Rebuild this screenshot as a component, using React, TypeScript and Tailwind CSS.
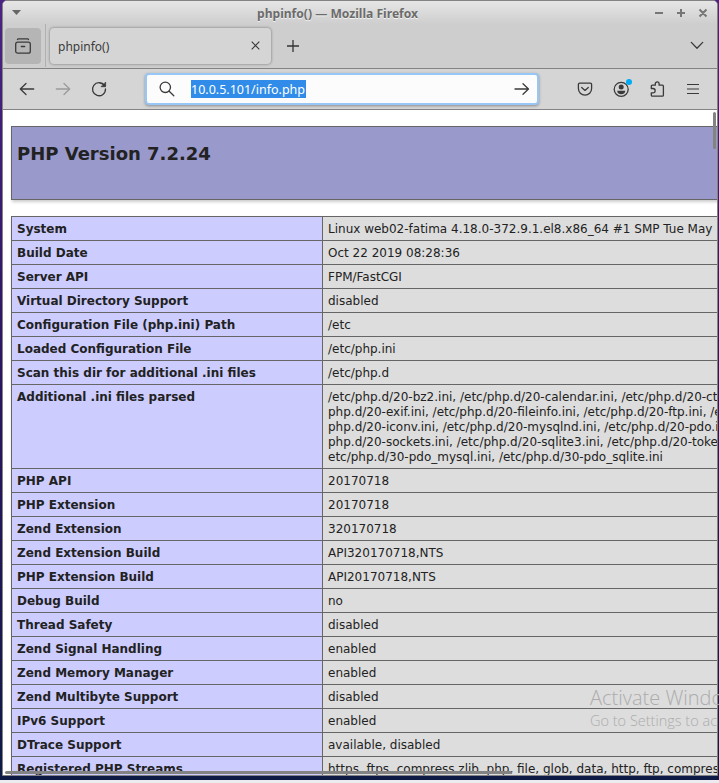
import React from "react";

const rows: [string, string[]][] = [
  ["System", ["Linux web02-fatima 4.18.0-372.9.1.el8.x86_64 #1 SMP Tue May"]],
  ["Build Date", ["Oct 22 2019 08:28:36"]],
  ["Server API", ["FPM/FastCGI"]],
  ["Virtual Directory Support", ["disabled"]],
  ["Configuration File (php.ini) Path", ["/etc"]],
  ["Loaded Configuration File", ["/etc/php.ini"]],
  ["Scan this dir for additional .ini files", ["/etc/php.d"]],
  [
    "Additional .ini files parsed",
    [
      "/etc/php.d/20-bz2.ini, /etc/php.d/20-calendar.ini, /etc/php.d/20-ct",
      "php.d/20-exif.ini, /etc/php.d/20-fileinfo.ini, /etc/php.d/20-ftp.ini, /e",
      "php.d/20-iconv.ini, /etc/php.d/20-mysqlnd.ini, /etc/php.d/20-pdo.i",
      "php.d/20-sockets.ini, /etc/php.d/20-sqlite3.ini, /etc/php.d/20-toke",
      "etc/php.d/30-pdo_mysql.ini, /etc/php.d/30-pdo_sqlite.ini",
    ],
  ],
  ["PHP API", ["20170718"]],
  ["PHP Extension", ["20170718"]],
  ["Zend Extension", ["320170718"]],
  ["Zend Extension Build", ["API320170718,NTS"]],
  ["PHP Extension Build", ["API20170718,NTS"]],
  ["Debug Build", ["no"]],
  ["Thread Safety", ["disabled"]],
  ["Zend Signal Handling", ["enabled"]],
  ["Zend Memory Manager", ["enabled"]],
  ["Zend Multibyte Support", ["disabled"]],
  ["IPv6 Support", ["enabled"]],
  ["DTrace Support", ["available, disabled"]],
  ["Registered PHP Streams", ["https, ftps, compress.zlib, php, file, glob, data, http, ftp, compres"]],
];

type IconProps = { className?: string; children: React.ReactNode; w?: number };

function Icon({ className = "", children, w = 1.3 }: IconProps) {
  return (
    <svg
      viewBox="0 0 16 16"
      className={`block size-4 shrink-0 overflow-visible ${className}`}
      fill="none"
      stroke="currentColor"
      strokeWidth={w}
      strokeLinecap="round"
      strokeLinejoin="round"
    >
      {children}
    </svg>
  );
}

function TitleBar() {
  return (
    <div className="flex h-[23px] shrink-0 items-center bg-linear-to-b from-[#e6e6e6] to-[#cecece] text-[#6b6b6b]">
      <svg className="ml-[9px] block h-[5px] w-[9px]" viewBox="0 0 9 5">
        <path d="M0 0h9L4.500 5z" fill="#666" />
      </svg>
      <div className="ml-[236px] w-[170px] pt-[2px] text-[12.100px] leading-[20px] font-bold whitespace-nowrap [text-shadow:0_1px_0_#f2f2f2]">
        phpinfo() — Mozilla Firefox
      </div>
      <svg className="ml-[227px] block h-[10px] w-[54px]" viewBox="0 0 54 10" stroke="#767676" strokeWidth="2" fill="none">
        <path d="M1 5h8M23 5h8M27 1v8M45.500 1.500l7 7M52.500 1.500l-7 7" />
      </svg>
    </div>
  );
}

function TabBar() {
  return (
    <div className="flex h-[44px] shrink-0 items-center bg-[#cecece] pb-px">
      <div className="ml-[2px] flex h-9 w-9 items-center justify-center rounded-[4px] bg-[#b5b5b5]">
        <Icon>
          <rect x="0.700" y="4.200" width="14.600" height="11" rx="2" />
          <path d="M2.500 1.500Q2.700 0.800 3.500 0.800h9Q13.300 0.800 13.500 1.500M6.300 8.500h3.400" />
        </Icon>
      </div>
      <div className="ml-1 h-full w-px bg-[#b0b0b0]" />
      <div className="ml-1 flex h-9 w-[221px] items-center rounded-[4px] bg-[#d5d5d5] pr-3 pl-2 shadow-[0_0_3px_rgba(0,0,0,0.45)]">
        <span className="flex-1 pt-[2px] text-[12px] leading-4">phpinfo()</span>
        <svg className="-mr-px block size-[9px]" viewBox="0 0 9 9" stroke="#333" strokeWidth="1.100">
          <path d="M.7.7l7.600 7.600M8.300.7L.7 8.300" />
        </svg>
      </div>
      <svg className="mt-px ml-[16px] block size-[12px]" viewBox="0 0 12 12" stroke="#333" strokeWidth="1.300">
        <path d="M0 6h12M6 0v12" />
      </svg>
      <svg className="mr-[14px] ml-auto block h-[7px] w-[12px] overflow-visible" viewBox="0 0 12 7" stroke="#3a3a3a" strokeWidth="1.300" fill="none" strokeLinecap="round" strokeLinejoin="round">
        <path d="M.3.4L6 6.200 11.700.4" />
      </svg>
    </div>
  );
}

function NavBar() {
  return (
    <div className="flex h-[41px] shrink-0 items-center border-t border-[#838383] bg-[#d5d5d5] text-[#3a3a3a]">
      <Icon className="ml-4">
        <path d="M1.300 8h13.400M7 2.500L1.300 8 7 13.500" />
      </Icon>
      <Icon className="ml-5 text-[#9b9b9b]">
        <path d="M1.300 8h13.400M9 2.500L14.700 8 9 13.500" />
      </Icon>
      <Icon className="ml-5">
        <path d="M13.400 4.600A6.500 6.500 0 1 0 14.500 8" />
        <path d="M14.600 1.500v4.200h-4.200z" fill="currentColor" strokeWidth="0.800" />
      </Icon>
      <div className="ml-[38px] flex h-[32px] w-[394px] items-center rounded-[4px] border-2 border-[#97c7f7] bg-[#fcfcfc] shadow-[0_1px_3px_rgba(0,0,0,0.35)]">
        <Icon className="ml-3">
          <circle cx="6.300" cy="6.300" r="5.200" />
          <path d="M10.200 10.200l4.600 4.600" />
        </Icon>
        <span className="ml-[16px] h-[18px] w-[115px] bg-[#308ce8] pt-px text-[12.500px] leading-[18px] whitespace-nowrap text-white">
          10.0.5.101/info.php
        </span>
        <Icon className="mr-[7px] ml-auto">
          <path d="M1 8h13.500M9 2.800L14.500 8 9 13.200" />
        </Icon>
      </div>
      <Icon className="ml-[38px]">
        <path d="M2.700 2.200h10.600a1.300 1.300 0 0 1 1.300 1.300v4a6.600 6.600 0 0 1-13.200 0v-4a1.300 1.300 0 0 1 1.300-1.300z" />
        <path d="M4.700 6.500L8 9.400l3.300-2.900" />
      </Icon>
      <div className="relative ml-5">
        <Icon>
          <circle cx="8.200" cy="8.300" r="7" />
          <circle cx="8.200" cy="6" r="2.500" fill="currentColor" stroke="none" />
          <path d="M4.200 9.800h8q0 3.400-4 3.400t-4-3.400z" fill="currentColor" stroke="none" />
        </Icon>
        <span className="absolute -top-[2px] left-[13px] size-[6px] rounded-full bg-[#00aaf5]" />
      </div>
      <Icon className="ml-5">
        <path d="M2.300 7.500V5.200a1 1 0 0 1 1-1h3V2.800a1.900 1.900 0 0 1 3.800 0v1.400h3.300a1 1 0 0 1 1 1v9a1 1 0 0 1-1 1H3.300a1 1 0 0 1-1-1v-2.400h1.700a2 2 0 0 0 0-4.300z" />
      </Icon>
      <svg className="ml-[22px] block h-[10px] w-3" viewBox="0 0 12 10" stroke="#3a3a3a" strokeWidth="1.200">
        <path d="M0 .5h12M0 5h12M0 9.500h12" />
      </svg>
    </div>
  );
}

function InfoPage() {
  return (
    <main className="relative flex-1 overflow-hidden border-t border-[#838383] bg-white pt-4 pl-2 font-['DejaVu_Sans',sans-serif] text-[12px] leading-[15px] text-[#222]">
      <div className="h-[74px] w-[934px] border border-[#666] bg-[#9999cc] px-[5px] pt-[16px] shadow-[1px_2px_3px_#ccc]">
        <h1 className="text-[18px] leading-[22px] font-bold">PHP Version 7.2.24</h1>
      </div>
      <div className="mt-4 w-[934px] border-t border-l border-[#666] shadow-[1px_2px_3px_#ccc]">
        {rows.map(([name, lines]) => (
          <div key={name} className="flex border-b border-[#666]">
            <div className="w-[311px] shrink-0 border-r border-[#666] bg-[#ccccff] px-[5px] pt-[5px] pb-[3px] font-bold">{name}</div>
            <div className="flex-1 bg-[#dddddd] px-[5px] pt-[5px] pb-[3px] whitespace-nowrap">
              {lines.map((l) => (
                <div key={l}>{l}</div>
              ))}
            </div>
          </div>
        ))}
      </div>
      <div className="absolute top-[2px] right-[1px] h-[37px] w-[3px] rounded-full bg-[#838383]" />
      <div className="absolute bottom-[1px] left-[2px] h-[3px] w-[507px] rounded-full bg-[#838383]" />
    </main>
  );
}

export default function App() {
  return (
    <div className="relative h-[783px] w-[719px] overflow-hidden bg-[#ececf0] font-['Noto_Sans',sans-serif] text-[#3a3a3a]">
      <div className="h-[780px] bg-linear-to-b from-[#4b2384] via-[#2a1560] to-[#0d1a45] pr-px pl-[2px]">
        <div className="flex h-[776px] flex-col overflow-hidden rounded-t-[5px] border border-[#838383] bg-[#cecece]">
          <TitleBar />
          <TabBar />
          <NavBar />
          <InfoPage />
        </div>
      </div>
      <div className="absolute top-[686px] left-[590px] font-['Open_Sans',sans-serif] font-light whitespace-nowrap text-[#acacac]">
        <div className="text-[20px] leading-[24px]">Activate Windo</div>
        <div className="text-[14.500px] leading-[22px]">Go to Settings to ac</div>
      </div>
    </div>
  );
}
